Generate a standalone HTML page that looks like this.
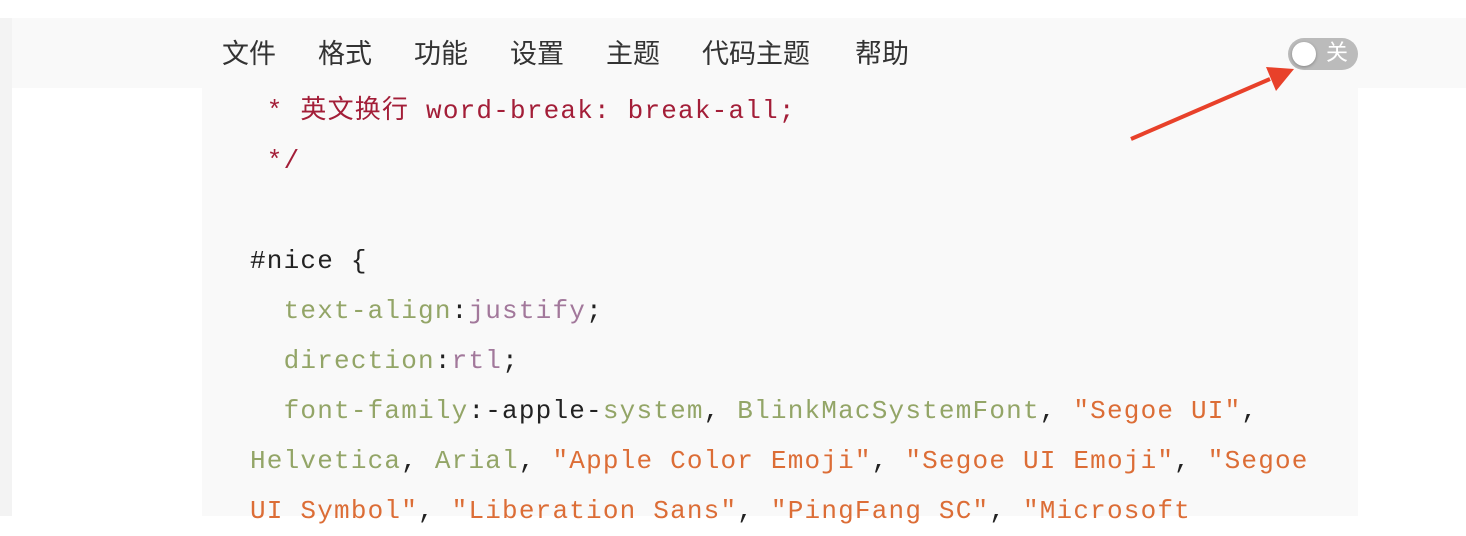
<!DOCTYPE html>
<html><head><meta charset="utf-8"><style>
body{margin:0;width:1466px;height:516px;overflow:hidden;background:#fff;position:relative;font-family:"Liberation Sans","Noto Sans CJK SC",sans-serif}
.l{position:absolute;left:0;top:18px;width:12px;height:498px;background:#f3f3f3}
.bar{position:absolute;left:12px;top:18px;width:1454px;height:70px;background:#f9f9f9}
.code{position:absolute;left:202px;top:88px;width:1156px;height:428px;background:#f9f9f9}
.menu{position:absolute;top:36px;font-size:27px;color:#333;line-height:36px}
.ln{position:absolute;left:250px;font-family:"Liberation Mono","Noto Sans CJK SC",monospace;font-size:26px;letter-spacing:1.2px;white-space:pre;line-height:50px;color:#222}
.c{color:#a31e38}.g{color:#93a567}.p{color:#a2789b}.o{color:#dc6d36}
.tg{position:absolute;left:1288px;top:38px;width:70px;height:32px;border-radius:16px;background:#bbb}
.kn{position:absolute;left:4px;top:4px;width:24px;height:24px;border-radius:50%;background:#fff;box-shadow:0 1px 3px rgba(0,0,0,.3)}
.tg span{position:absolute;left:38px;top:1px;color:#fff;font-size:22px;line-height:28px}
</style></head><body>
<div class="l"></div><div class="bar"></div><div class="code"></div>
<div class="menu" style="left:222px">文件</div>
<div class="menu" style="left:318px">格式</div>
<div class="menu" style="left:414px">功能</div>
<div class="menu" style="left:510px">设置</div>
<div class="menu" style="left:606px">主题</div>
<div class="menu" style="left:702px">代码主题</div>
<div class="menu" style="left:855px">帮助</div>
<div class="tg"><div class="kn"></div><span>关</span></div>
<svg style="position:absolute;left:0;top:0" width="1466" height="516"><line x1="1131" y1="139" x2="1270" y2="79" stroke="#e8412a" stroke-width="4"/><polygon points="1294,69 1266,67 1276,91" fill="#e8412a"/></svg>
<div class="ln c" style="top:86px"> * 英文换行 word-break: break-all;</div>
<div class="ln c" style="top:136px"> */</div>
<div class="ln" style="top:236px">#nice {</div>
<div class="ln" style="top:286px">  <span class="g">text-align</span>:<span class="p">justify</span>;</div>
<div class="ln" style="top:336px">  <span class="g">direction</span>:<span class="p">rtl</span>;</div>
<div class="ln" style="top:386px">  <span class="g">font-family</span>:-apple-<span class="g">system</span>, <span class="g">BlinkMacSystemFont</span>, <span class="o">"Segoe UI"</span>,</div>
<div class="ln" style="top:436px"><span class="g">Helvetica</span>, <span class="g">Arial</span>, <span class="o">"Apple Color Emoji"</span>, <span class="o">"Segoe UI Emoji"</span>, <span class="o">"Segoe</span></div>
<div class="ln" style="top:486px"><span class="o">UI Symbol"</span>, <span class="o">"Liberation Sans"</span>, <span class="o">"PingFang SC"</span>, <span class="o">"Microsoft</span></div>
</body></html>
